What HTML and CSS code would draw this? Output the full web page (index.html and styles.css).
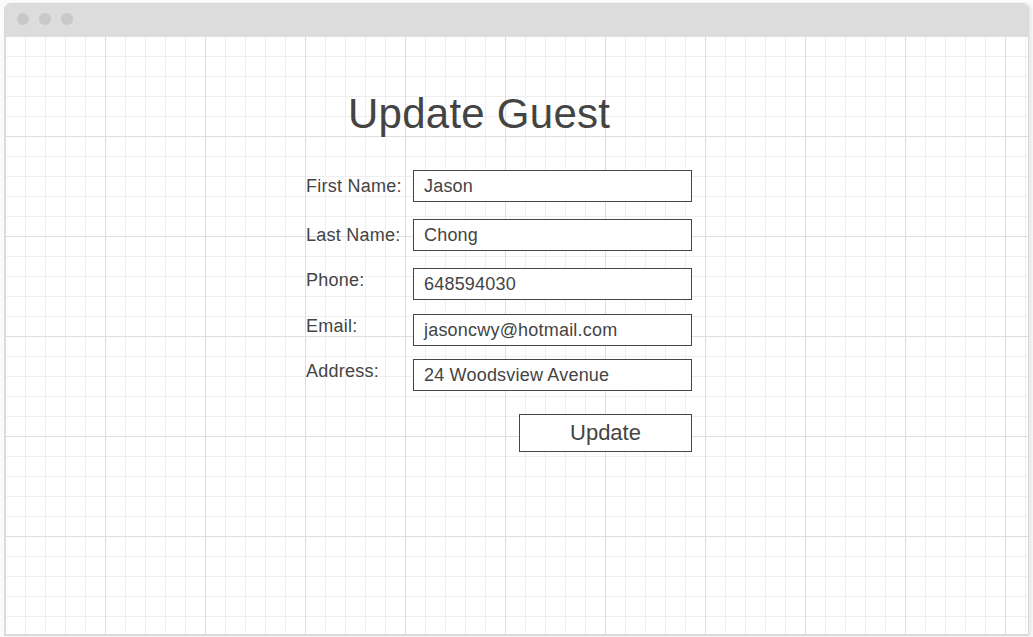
FILE: index.html
```html
<!DOCTYPE html>
<html lang="en">
<head>
<meta charset="utf-8">
<title>Update Guest</title>
<link rel="stylesheet" href="styles.css">
</head>
<body>
<div class="window">
  <div class="titlebar">
    <span class="dot"></span>
    <span class="dot"></span>
    <span class="dot"></span>
  </div>
  <div class="canvas">
    <h1 class="title">Update Guest</h1>
    <div class="form">
      <div class="row row--center row--gap17">
        <div class="label">First Name:</div>
        <div class="field">Jason</div>
      </div>
      <div class="row row--center row--gap17">
        <div class="label">Last Name:</div>
        <div class="field">Chong</div>
      </div>
      <div class="row row--top row--gap14">
        <div class="label">Phone:</div>
        <div class="field">648594030</div>
      </div>
      <div class="row row--top row--gap13">
        <div class="label">Email:</div>
        <div class="field">jasoncwy@hotmail.com</div>
      </div>
      <div class="row row--top row--gap23">
        <div class="label">Address:</div>
        <div class="field">24 Woodsview Avenue</div>
      </div>
      <div class="button">Update</div>
    </div>
  </div>
</div>
</body>
</html>
```

FILE: styles.css
```css
html, body {
  margin: 0;
  padding: 0;
}

body {
  background: #fbfbfb;
  width: 1033px;
  height: 637px;
  overflow: hidden;
  font-family: "Liberation Sans", Arial, sans-serif;
  color: #444;
}

.window {
  margin: 3px 0 0 4px;
  width: 1025px;
  box-sizing: border-box;
  border: 1px solid #d9d9d9;
  border-radius: 6px 6px 0 0;
  box-shadow: 3px 0 3px rgba(0, 0, 0, 0.07);
  overflow: hidden;
  background: #fff;
}

.titlebar {
  height: 32px;
  background: #dcdcdc;
  display: flex;
  align-items: flex-start;
  gap: 10px;
  padding: 9px 0 0 12px;
  box-sizing: border-box;
}

.dot {
  width: 12px;
  height: 12px;
  border-radius: 50%;
  background: #c8c8c8;
}

.canvas {
  height: 599px;
  box-sizing: border-box;
  padding: 54px 0 0 300px;
  background-color: #fff;
  background-image:
    linear-gradient(to right, #dedede 1px, transparent 1px),
    linear-gradient(to bottom, #dedede 1px, transparent 1px),
    linear-gradient(to right, #efefef 1px, transparent 1px),
    linear-gradient(to bottom, #efefef 1px, transparent 1px);
  background-size: 100px 100px, 100px 100px, 20px 20px, 20px 20px;
  border-bottom: 1px solid #d9d9d9;
}

.title {
  margin: 0 0 0 43px;
  font-size: 42px;
  font-weight: normal;
  letter-spacing: 0.25px;
  line-height: 48px;
  height: 48px;
  color: #444;
}

.form {
  margin-top: 32px;
  width: 387px;
  display: flex;
  flex-direction: column;
}

.row {
  display: flex;
}

.row--center {
  align-items: center;
}

.row--center .label {
  line-height: 32px;
}

.row--top {
  align-items: flex-start;
}

.row--top .label {
  line-height: 24px;
}

.row--gap17 { margin-bottom: 17px; }
.row--gap14 { margin-bottom: 14px; }
.row--gap13 { margin-bottom: 13px; }
.row--gap23 { margin-bottom: 23px; }

.label {
  width: 108px;
  box-sizing: border-box;
  padding-left: 1px;
  font-size: 18px;
  letter-spacing: 0.25px;
  color: #444;
  white-space: nowrap;
}

.field {
  width: 279px;
  height: 32px;
  box-sizing: border-box;
  border: 1px solid #454545;
  background: #fff;
  padding: 0 10px;
  font-size: 18px;
  letter-spacing: 0.2px;
  line-height: 30px;
  color: #444;
  white-space: nowrap;
}

.button {
  align-self: flex-end;
  width: 173px;
  height: 38px;
  box-sizing: border-box;
  border: 1px solid #454545;
  background: #fff;
  font-size: 22px;
  line-height: 36px;
  text-align: center;
  color: #444;
}
```
